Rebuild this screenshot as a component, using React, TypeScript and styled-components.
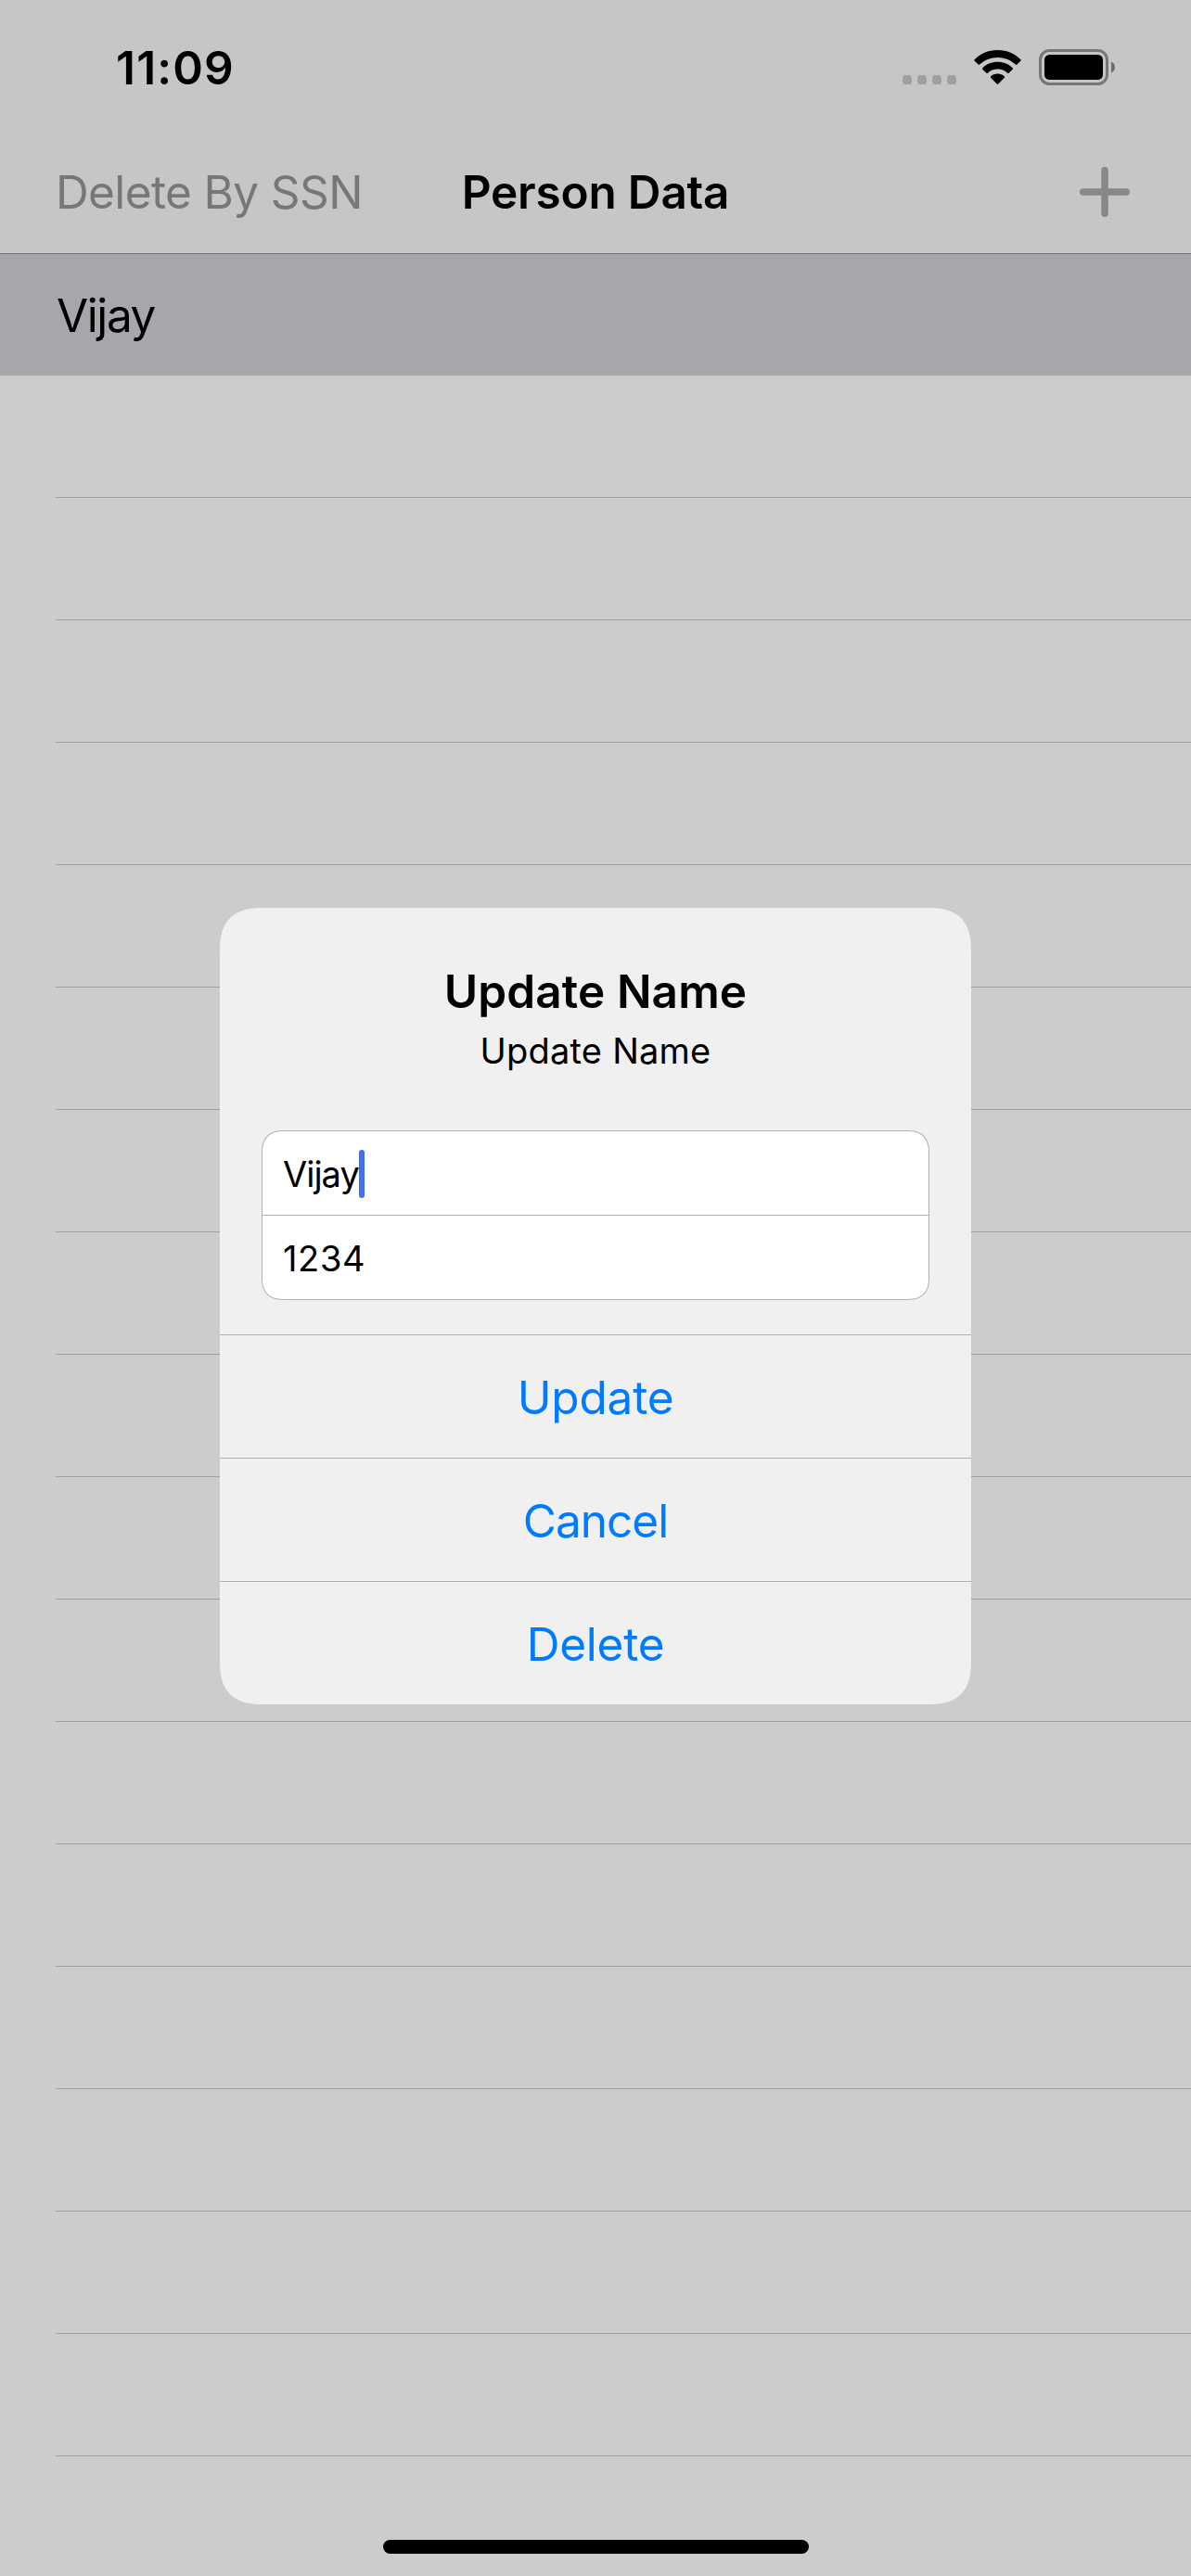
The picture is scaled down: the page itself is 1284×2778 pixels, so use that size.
import React from "react";
import styled, { createGlobalStyle } from "styled-components";

const GlobalStyle = createGlobalStyle`
  *, *::before, *::after { box-sizing: border-box; }
  body { margin: 0; background: #cccccc; }
  button { border: 0; margin: 0; padding: 0; background: none; font: inherit; color: inherit; }
  h1, h2, p, ul { margin: 0; padding: 0; font: inherit; }
  svg { display: block; flex: none; }
`;

const Screen = styled.main`
  position: relative;
  display: flex;
  flex-direction: column;
  width: 1284px;
  height: 2778px;
  overflow: hidden;
  background: #cccccc;
  color: #000;
  font-family: Inter, "Liberation Sans", sans-serif;
  font-size: 49.5px;
  line-height: 60px;
  white-space: nowrap;
`;

const Header = styled.header`
  flex: none;
  height: 274px;
  background: #c6c6c6;
  border-bottom: 1px solid #757578;
`;

const StatusBar = styled.div`
  display: flex;
  align-items: center;
  justify-content: space-between;
  height: 141px;
  padding: 5px 82px 0 125px;
`;

const Clock = styled.span`
  font-weight: 600;
  letter-spacing: 1.2px;
`;

const StatusIcons = styled.div`
  display: flex;
  align-items: center;
`;

const SignalDots = styled.div`
  display: flex;
  gap: 6px;
  margin: 26px 19px 0 0;
`;

const Dot = styled.i`
  width: 10px;
  height: 10px;
  border-radius: 3px;
  background: #a0a0a0;
`;

const NavBar = styled.nav`
  display: grid;
  grid-template-columns: 1fr auto 1fr;
  align-items: center;
  height: 132px;
  padding: 0 60px;
`;

const NavAction = styled.button`
  justify-self: start;
  color: #777777;
  letter-spacing: -0.62px;
`;

const NavTitle = styled.h1`
  font-weight: 600;
  letter-spacing: -0.2px;
`;

const AddButton = styled.button`
  justify-self: end;
  margin-right: 6px;
`;

const List = styled.ul`
  display: flex;
  flex-direction: column;
  list-style: none;
`;

const SelectedRow = styled.li`
  display: flex;
  align-items: center;
  height: 131px;
  padding-left: 61px;
  background: #a7a6ab;
  letter-spacing: -1.4px;
`;

const EmptyRow = styled.li`
  height: 132px;
  margin-left: 60px;
  border-bottom: 1px solid #9e9e9f;
`;

const Overlay = styled.div`
  position: absolute;
  inset: 0;
  display: flex;
  justify-content: center;
  align-items: flex-start;
  padding-top: 979px;
`;

const Alert = styled.section`
  display: flex;
  flex-direction: column;
  width: 810px;
  border-radius: 48px;
  corner-shape: superellipse(1.41);
  background: #f0f0f0;
  overflow: hidden;
`;

const AlertBody = styled.div`
  display: flex;
  flex-direction: column;
  padding: 60px 45px 37px;
  text-align: center;
`;

const AlertTitle = styled.h2`
  font-weight: 600;
  letter-spacing: 0.11px;
`;

const AlertMessage = styled.p`
  margin-top: 10px;
  font-size: 38px;
  line-height: 48px;
  letter-spacing: 0.22px;
`;

const Fields = styled.div`
  display: flex;
  flex-direction: column;
  margin-top: 62px;
  border: 1px solid #b0b0b2;
  border-radius: 24px;
  corner-shape: superellipse(1.3);
  background: #fff;
  font-size: 38px;
  line-height: 48px;
`;

const Field = styled.div<{ $tracking: number }>`
  display: flex;
  align-items: center;
  height: 90px;
  padding: 2px 22px 0;
  letter-spacing: ${(p) => p.$tracking}px;

  & + & {
    height: 91px;
    border-top: 1px solid #b0b0b2;
  }
`;

const Caret = styled.i`
  width: 6px;
  height: 52px;
  border-radius: 3px;
  background: #456cf1;
`;

const AlertButton = styled.button<{ $tracking: number }>`
  display: flex;
  align-items: center;
  justify-content: center;
  height: 133px;
  padding-top: 2px;
  border-top: 1px solid #b0b0b2;
  color: #007aff;
  letter-spacing: ${(p) => p.$tracking}px;
`;

const HomeIndicator = styled.div`
  position: absolute;
  left: 413px;
  bottom: 24px;
  width: 459px;
  height: 15px;
  border-radius: 8px;
  background: #000;
`;

const WifiIcon = () => (
  <svg width="52" height="38" viewBox="0 0 52 38">
    <path d="M25.5 0C35.6 0 44.4 4 50.3 10.2C50.9 10.8 50.9 11.2 50.3 11.8L46.4 15.6C45.9 16.1 45.4 16.1 44.9 15.6C39.9 10.8 33 8 25.5 8C18 8 11.1 10.8 6.1 15.6C5.6 16.1 5.1 16.1 4.6 15.6L.7 11.8C.1 11.2 .1 10.8 .7 10.2C6.6 4 15.4 0 25.5 0Z" />
    <path d="M25.5 12.8C31.9 12.8 37.6 15.2 41.6 19.2C42.2 19.8 42.2 20.3 41.6 20.9L37.6 24.7C37.1 25.2 36.6 25.2 36 24.7C33.2 22.1 29.5 20.6 25.5 20.6C21.5 20.6 17.8 22.1 15 24.7C14.4 25.2 13.9 25.2 13.4 24.7L9.4 20.9C8.8 20.3 8.8 19.8 9.4 19.2C13.4 15.2 19.1 12.8 25.5 12.8Z" />
    <path d="M25.5 25.6C28.3 25.6 30.9 26.6 32.7 28.3C33.3 28.9 33.3 29.4 32.7 30L26.3 36.5C25.8 37 25.2 37 24.7 36.5L18.3 30C17.7 29.4 17.7 28.9 18.3 28.3C20.1 26.6 22.7 25.6 25.5 25.6Z" />
  </svg>
);

const Wifi = styled.span`
  margin-right: 18px;
`;

const BatteryIcon = () => (
  <svg width="82" height="40" viewBox="0 0 82 40">
    <rect x="1.5" y="1.5" width="72" height="36" rx="10" fill="none" stroke="#777777" strokeWidth="3" />
    <rect x="6" y="6" width="63" height="27" rx="5.5" />
    <path d="M78 13.5C80.5 14.5 82 16.8 82 19.5S80.5 24.5 78 25.5Z" fill="#6e6e6e" />
  </svg>
);

const PlusIcon = () => (
  <svg width="54" height="54" viewBox="0 0 54 54">
    <path d="M27 3.8V50.2M3.8 27H50.2" fill="none" stroke="#888888" strokeWidth="7.5" strokeLinecap="round" />
  </svg>
);

const actions = [
  { label: "Update", tracking: -0.19 },
  { label: "Cancel", tracking: -0.95 },
  { label: "Delete", tracking: -0.23 },
];

export default function App() {
  return (
    <>
      <GlobalStyle />
      <Screen>
        <Header>
          <StatusBar>
            <Clock>11:09</Clock>
            <StatusIcons>
              <SignalDots>
                <Dot />
                <Dot />
                <Dot />
                <Dot />
              </SignalDots>
              <Wifi>
                <WifiIcon />
              </Wifi>
              <BatteryIcon />
            </StatusIcons>
          </StatusBar>
          <NavBar>
            <NavAction>Delete By SSN</NavAction>
            <NavTitle>Person Data</NavTitle>
            <AddButton aria-label="Add">
              <PlusIcon />
            </AddButton>
          </NavBar>
        </Header>
        <List>
          <SelectedRow>Vijay</SelectedRow>
          {Array.from({ length: 17 }, (_, i) => (
            <EmptyRow key={i} />
          ))}
        </List>
        <Overlay>
          <Alert role="dialog">
            <AlertBody>
              <AlertTitle>Update Name</AlertTitle>
              <AlertMessage>Update Name</AlertMessage>
              <Fields>
                <Field $tracking={-1}>
                  Vijay
                  <Caret />
                </Field>
                <Field $tracking={0.63}>1234</Field>
              </Fields>
            </AlertBody>
            {actions.map((a) => (
              <AlertButton key={a.label} $tracking={a.tracking}>
                {a.label}
              </AlertButton>
            ))}
          </Alert>
        </Overlay>
        <HomeIndicator />
      </Screen>
    </>
  );
}
